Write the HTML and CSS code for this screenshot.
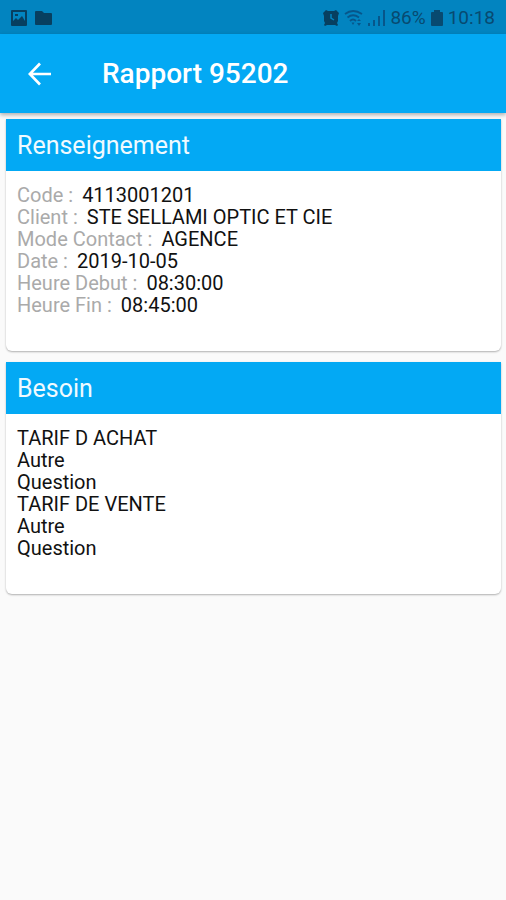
FILE: index.html
```html
<!DOCTYPE html>
<html lang="fr">
<head>
<meta charset="utf-8">
<meta name="viewport" content="width=device-width, initial-scale=1">
<title>Rapport 95202</title>
<link rel="stylesheet" href="styles.css">
</head>
<body>
<div class="status-bar">
  <div class="status-group">
    <svg width="18" height="18" viewBox="0 0 18 18" aria-hidden="true"><path fill="currentColor" fill-rule="evenodd" d="M2 1h14a1 1 0 0 1 1 1v14a1 1 0 0 1-1 1H2a1 1 0 0 1-1-1V2a1 1 0 0 1 1-1zm1 2v9l3-3 2 2 4-4 3 5V3zM5 5h3v2H5z"/></svg>
    <svg width="18" height="18" viewBox="0 0 18 18" aria-hidden="true"><path fill="currentColor" d="M1 2h6l2 2h7a1 1 0 0 1 1 1v10a1 1 0 0 1-1 1H1a1 1 0 0 1-1-1V3a1 1 0 0 1 1-1z"/></svg>
  </div>
  <div class="status-group status-right">
    <svg width="18" height="18" viewBox="0 0 18 18" aria-hidden="true"><path fill="currentColor" d="M1 4l3-3 2 1h6l2-1 3 3-1 3v5l-1 2 1 2-1 1-2-1H5l-2 1-1-1 1-2-1-2V7z"/><path d="M9 5v4l3 2" fill="none" stroke="#0284c0" stroke-width="1.5"/></svg>
    <svg class="signal" width="20" height="18" viewBox="0 0 20 18" aria-hidden="true"><g fill="none" stroke="currentColor" stroke-width="1.8"><path d="M1 5Q9 -1 18 5M3.500 8.500Q9 4 15 8.500M6 12Q9 9 12 12"/></g><path fill="currentColor" d="M7.500 13.500h3L9 16zM13 12l2-2 2 2zM13 14h4l-2 3z"/></svg>
    <svg class="signal" width="18" height="18" viewBox="0 0 18 18" aria-hidden="true"><path fill="currentColor" d="M0 14h2v3H0zM5 11h2v6H5zM10 7h2v10h-2zM15 1h2v16h-2z"/></svg>
    <span class="status-text battery-text">86%</span>
    <svg class="battery" width="14" height="18" viewBox="0 0 14 18" aria-hidden="true"><path fill="currentColor" d="M4 1h6v2h2a1 1 0 0 1 1 1v12a1 1 0 0 1-1 1H2a1 1 0 0 1-1-1V4a1 1 0 0 1 1-1h2z"/></svg>
    <span class="status-text">10:18</span>
  </div>
</div>
<header class="app-bar">
  <button class="back" type="button" aria-label="Retour">
    <svg width="24" height="24" viewBox="0 0 24 24" aria-hidden="true"><path d="M12 1.500L1.800 12 12 22.500M2 12h21" fill="none" stroke="currentColor" stroke-width="2.700"/></svg>
  </button>
  <h1 class="title">Rapport 95202</h1>
</header>
<main class="content">
  <section class="card">
    <h2 class="card-title">Renseignement</h2>
    <dl class="card-body">
      <div class="field"><dt>Code :</dt><dd>4113001201</dd></div>
      <div class="field"><dt>Client :</dt><dd>STE SELLAMI OPTIC ET CIE</dd></div>
      <div class="field"><dt>Mode Contact :</dt><dd>AGENCE</dd></div>
      <div class="field"><dt>Date :</dt><dd>2019-10-05</dd></div>
      <div class="field"><dt>Heure Debut :</dt><dd>08:30:00</dd></div>
      <div class="field"><dt>Heure Fin :</dt><dd>08:45:00</dd></div>
    </dl>
  </section>
  <section class="card">
    <h2 class="card-title">Besoin</h2>
    <ul class="card-body">
      <li>TARIF D ACHAT</li>
      <li>Autre</li>
      <li>Question</li>
      <li>TARIF DE VENTE</li>
      <li>Autre</li>
      <li>Question</li>
    </ul>
  </section>
</main>
</body>
</html>
```
FILE: styles.css
```css
* { box-sizing: border-box; }
body {
  margin: 0;
  background: #fafafa;
  color: #111;
  font-family: Roboto, "Liberation Sans", sans-serif;
}
h1, h2, dl, ul, dd { margin: 0; padding: 0; }
ul { list-style: none; }
svg { display: block; flex: none; }
.status-bar {
  display: flex;
  align-items: center;
  justify-content: space-between;
  height: 34px;
  padding: 2px 11px 0 10px;
  background: #0284c0;
  color: #073f60;
}
.status-group { display: flex; align-items: center; gap: 7px; }
.status-right { gap: 4px; }
.status-text { font-size: 19px; line-height: 24px; color: #084a70; }
.signal { color: #07568a; }
.battery { color: #084a70; }
.app-bar {
  position: relative;
  display: flex;
  align-items: center;
  height: 79px;
  padding: 1px 28px 0;
  background: #03a9f4;
  color: #fff;
  box-shadow: 0 2px 4px rgba(0, 0, 0, 0.3);
}
.back {
  padding: 0;
  border: 0;
  background: none;
  color: inherit;
  cursor: pointer;
}
.title {
  margin-left: 50px;
  font-size: 28px;
  font-weight: 500;
  line-height: 32px;
}
.content {
  display: grid;
  gap: 11px;
  padding: 6px 5px 6px 6px;
}
.card {
  overflow: hidden;
  background: #fff;
  border-radius: 0 0 6px 6px;
  box-shadow: 0 1px 2px rgba(0, 0, 0, 0.3);
}
.card-title {
  padding: 11px 11px 9px;
  background: #03a9f4;
  color: #f0faff;
  font-size: 25px;
  font-weight: 400;
  line-height: 32px;
}
.card-body {
  padding: 13px 11px 35px;
  font-size: 20px;
  line-height: 22px;
}
.field { display: flex; gap: 9px; }
.field dt { color: #aaa; }
```
